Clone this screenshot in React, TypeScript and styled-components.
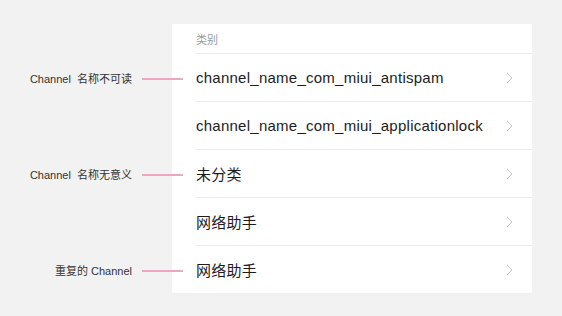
import * as React from "react";
import styled, { createGlobalStyle } from "styled-components";

const GlobalStyle = createGlobalStyle`
  html, body {
    margin: 0;
    padding: 0;
    background: #f2f2f2;
  }
  body {
    font-family: "Liberation Sans", "Noto Sans CJK SC", sans-serif;
    -webkit-font-smoothing: antialiased;
  }
`;

const Page = styled.div`
  width: 562px;
  height: 316px;
  padding: 24px 30px 0 172px;
  box-sizing: border-box;
`;

const Card = styled.div`
  width: 360px;
  background: #ffffff;
`;

const Header = styled.div`
  height: 30px;
  margin-left: 24px;
  display: flex;
  align-items: center;
  border-bottom: 1px solid #ececec;
  box-sizing: border-box;
  padding-top: 1px;
  font-size: 11px;
  color: #9a9a9a;
`;

const Row = styled.div<{ $last?: boolean }>`
  position: relative;
  height: ${(p) => (p.$last ? "47px" : "48px")};
  box-sizing: border-box;
  margin-left: 24px;
  padding-right: 19px;
  display: flex;
  align-items: center;
  justify-content: space-between;
  border-bottom: ${(p) => (p.$last ? "none" : "1px solid #ececec")};
`;

const Title = styled.span`
  font-size: 15px;
  letter-spacing: 0.25px;
  color: #1c1c1c;
`;

const Chevron = styled.svg`
  width: 7px;
  height: 12px;
  flex: none;
`;

/* callout sitting left of the card, pointing at a row */
const Callout = styled.div`
  position: absolute;
  right: calc(100% + 13px);
  top: 50%;
  transform: translateY(-50%);
  display: flex;
  align-items: center;
  gap: 10px;
  white-space: pre;
`;

const Note = styled.span`
  font-size: 11px;
  color: #333333;
`;

const Line = styled.div`
  width: 41px;
  height: 2px;
  margin-top: 2px;
  background: #e7a9bf;
`;

type Item = { title: string; note?: string };

const items: Item[] = [
  { title: "channel_name_com_miui_antispam", note: "Channel  名称不可读" },
  { title: "channel_name_com_miui_applicationlock" },
  { title: "未分类", note: "Channel  名称无意义" },
  { title: "网络助手" },
  { title: "网络助手", note: "重复的 Channel" },
];

function Arrow() {
  return (
    <Chevron viewBox="0 0 7 12">
      <path d="M1 1 L6 6 L1 11" fill="none" stroke="#c6c6c6" strokeWidth="1" />
    </Chevron>
  );
}

export default function App() {
  return (
    <>
      <GlobalStyle />
      <Page>
        <Card>
          <Header>类别</Header>
          {items.map((item, i) => (
            <Row key={i} $last={i === items.length - 1}>
              {item.note && (
                <Callout>
                  <Note>{item.note}</Note>
                  <Line />
                </Callout>
              )}
              <Title>{item.title}</Title>
              <Arrow />
            </Row>
          ))}
        </Card>
      </Page>
    </>
  );
}
